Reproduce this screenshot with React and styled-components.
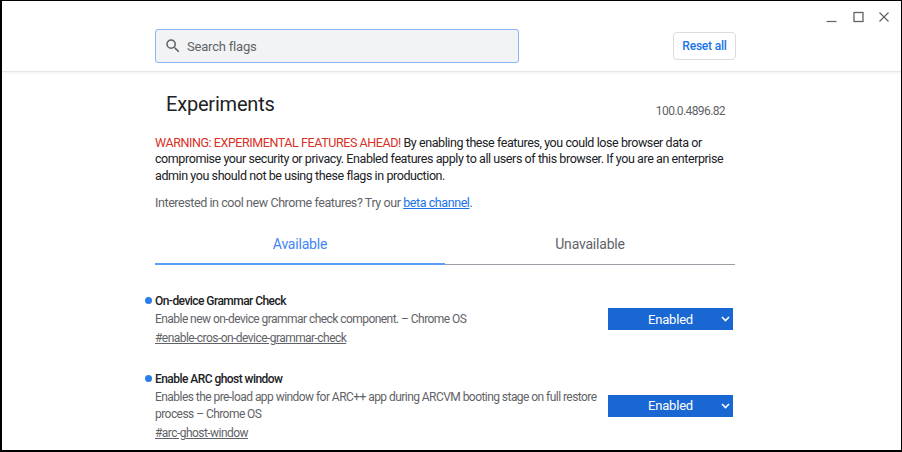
import React from 'react'
import styled, { createGlobalStyle } from 'styled-components'

const Global = createGlobalStyle`
  html, body { margin: 0; padding: 0; background: #fff; }
  body { font-family: Roboto, "Liberation Sans", sans-serif; }
  * { box-sizing: border-box; }
`

const Frame = styled.div`
  width: 902px;
  height: 452px;
  border: 1px solid #000;
  border-left-width: 2px;
  border-bottom-width: 2px;
  overflow: hidden;
  position: relative;
  background: #fff;
`

const WindowControls = styled.div`
  position: absolute;
  top: 8px;
  right: 9px;
  display: flex;
  gap: 10px;
  color: #5f6368;
  svg { display: block; }
`

const Header = styled.header`
  height: 71px;
  border-bottom: 1px solid #e6e6e6;
  box-shadow: 0 1px 2px rgba(0, 0, 0, 0.06);
  display: flex;
  align-items: center;
  padding: 20px 0 0 153px;
`

const Search = styled.div`
  width: 364px;
  height: 34px;
  background: #f1f3f4;
  border: 1px solid #8ab4f8;
  border-radius: 3px;
  display: flex;
  align-items: center;
  padding-left: 8px;
  gap: 5px;
  color: #5f6368;
  font-size: 13px;
  letter-spacing: -0.2px;
  svg { display: block; }
`

const ResetButton = styled.button`
  margin-left: 154px;
  width: 63px;
  height: 28px;
  background: #fff;
  border: 1px solid #dadce0;
  border-radius: 4px;
  color: #1a73e8;
  font: 500 12px Roboto, "Liberation Sans", sans-serif;
  letter-spacing: -0.2px;
  padding: 0;
`

const Main = styled.main`
  width: 580px;
  margin-left: 153px;
  padding-top: 20px;
`

const TitleRow = styled.div`
  display: flex;
  justify-content: space-between;
  align-items: flex-end;
  padding-left: 11px;
  padding-right: 10px;
`

const Title = styled.h1`
  margin: 0;
  font-size: 20px;
  font-weight: 400;
  color: #202124;
  line-height: 24px;
  letter-spacing: -0.2px;
`

const Version = styled.span`
  font-size: 12px;
  color: #5f6368;
  margin-bottom: -2px;
  letter-spacing: -0.6px;
`

const Warning = styled.p`
  margin: 19px 0 0;
  font-size: 12.5px;
  line-height: 16.3px;
  letter-spacing: -0.42px;
  color: #202124;
  span { color: #d93025; }
`

const Intro = styled.p`
  margin: 11px 0 0;
  font-size: 12.5px;
  letter-spacing: -0.42px;
  color: #5f6368;
  a { color: #1a73e8; }
`

const Tabs = styled.div`
  display: flex;
  margin-top: 23px;
`

const Tab = styled.div`
  flex: 1;
  text-align: center;
  font-size: 14px;
  height: 32px;
  line-height: 22px;
  letter-spacing: -0.2px;
  color: ${p => (p.$active ? '#4285f4' : '#5f6368')};
  border-bottom: ${p => (p.$active ? '2px solid #5a9cf8' : '1px solid #9aa0a6')};
`

const FlagList = styled.div`
  margin-top: 27px;
  display: flex;
  flex-direction: column;
  gap: 23px;
`

const Flag = styled.div`
  display: flex;
  align-items: center;
  justify-content: space-between;
  position: relative;
`

const FlagText = styled.div`
  width: 450px;
  font-size: 12px;
  line-height: 18px;
  letter-spacing: -0.55px;
`

const Dot = styled.span`
  position: absolute;
  left: -10px;
  top: 5px;
  width: 7px;
  height: 7px;
  border-radius: 50%;
  background: #2b7de9;
`

const FlagName = styled.div`
  font-weight: 500;
  color: #202124;
  font-size: 12px;
`

const FlagDesc = styled.div`
  color: #5f6368;
  line-height: 17px;
  margin: 1px 0;
`

const FlagLink = styled.a`
  color: #5f6368;
  text-decoration: underline;
  display: block;
`

const Select = styled.div`
  width: 125px;
  height: 22px;
  background: #1967d2;
  color: #fff;
  font-size: 13px;
  letter-spacing: -0.2px;
  display: flex;
  align-items: center;
  justify-content: center;
  position: relative;
  margin-right: 2px;
  svg { position: absolute; right: 3px; top: 8px; }
`

const flags = [
  {
    name: 'On-device Grammar Check',
    desc: 'Enable new on-device grammar check component. – Chrome OS',
    link: '#enable-cros-on-device-grammar-check',
  },
  {
    name: 'Enable ARC ghost window',
    desc: 'Enables the pre-load app window for ARC++ app during ARCVM booting stage on full restore process – Chrome OS',
    link: '#arc-ghost-window',
  },
]

const Chevron = () => (
  <svg width="9" height="6" viewBox="0 0 9 6">
    <path d="M1 1l3.5 3.5L8 1" fill="none" stroke="#fff" strokeWidth="1.6" />
  </svg>
)

export default function App() {
  return (
    <Frame>
      <Global />
      <WindowControls>
        <svg width="16" height="16" viewBox="0 0 16 16">
          <path d="M2.5 12.5h10" stroke="#5f6368" strokeWidth="1.2" />
        </svg>
        <svg width="16" height="16" viewBox="0 0 16 16">
          <rect x="4" y="3.5" width="9" height="9" fill="none" stroke="#5f6368" strokeWidth="1.3" />
        </svg>
        <svg width="16" height="16" viewBox="0 0 16 16">
          <path d="M3.5 3.5l9 9M12.5 3.5l-9 9" stroke="#5f6368" strokeWidth="1.2" />
        </svg>
      </WindowControls>
      <Header>
        <Search>
          <svg width="18" height="18" viewBox="0 0 24 24">
            <path
              d="M15.5 14h-.79l-.28-.27A6.47 6.47 0 0 0 16 9.5 6.5 6.5 0 1 0 9.5 16c1.61 0 3.090-.59 4.23-1.57l.27.28v.79l5 4.99L20.49 19l-4.99-5zm-6 0C7.01 14 5 11.99 5 9.5S7.01 5 9.5 5 14 7.01 14 9.5 11.99 14 9.5 14z"
              fill="#5f6368"
            />
          </svg>
          Search flags
        </Search>
        <ResetButton>Reset all</ResetButton>
      </Header>
      <Main>
        <TitleRow>
          <Title>Experiments</Title>
          <Version>100.0.4896.82</Version>
        </TitleRow>
        <Warning>
          <span>WARNING: EXPERIMENTAL FEATURES AHEAD!</span> By enabling these features, you could lose
          browser data or compromise your security or privacy. Enabled features apply to all users of
          this browser. If you are an enterprise admin you should not be using these flags in production.
        </Warning>
        <Intro>
          Interested in cool new Chrome features? Try our <a href="#">beta channel</a>.
        </Intro>
        <Tabs>
          <Tab $active>Available</Tab>
          <Tab>Unavailable</Tab>
        </Tabs>
        <FlagList>
          {flags.map(f => (
            <Flag key={f.link}>
              <Dot />
              <FlagText>
                <FlagName>{f.name}</FlagName>
                <FlagDesc>{f.desc}</FlagDesc>
                <FlagLink href={f.link}>{f.link}</FlagLink>
              </FlagText>
              <Select>
                Enabled
                <Chevron />
              </Select>
            </Flag>
          ))}
        </FlagList>
      </Main>
    </Frame>
  )
}
